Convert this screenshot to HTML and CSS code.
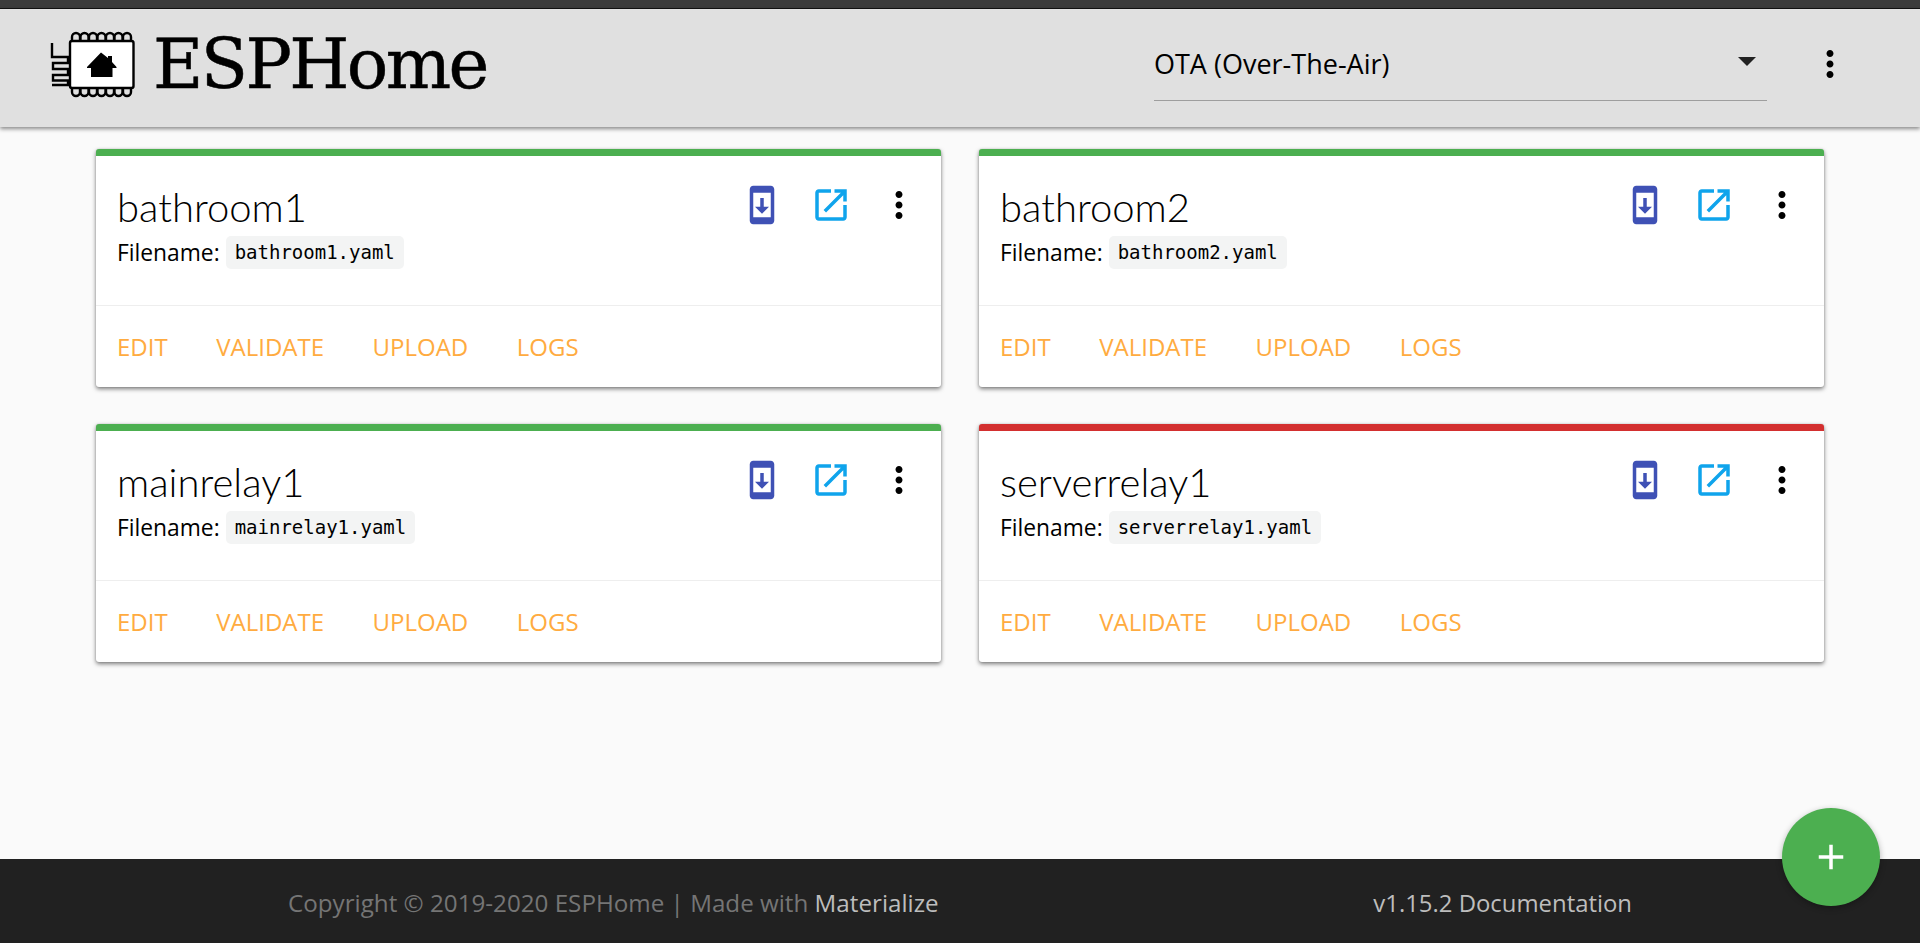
FILE: index.html
```html
<!DOCTYPE html>
<html lang="en">
<head>
    <meta charset="UTF-8">
    <title>ESPHome Dashboard</title>
    <link rel="stylesheet" href="styles.css">
</head>
<body>
    <div class="window-bar"></div>
    <header class="topbar">
        <svg class="logo" viewBox="48 30 90 68" fill="none" stroke="#000" stroke-width="2.4">
            <path d="M52 43V57H68V63H53V69H68V75H53V80.500H68V85H52"/>
            <path d="M72 41V37a3 3 0 0 1 8 0v4M80.500 41V37a3 3 0 0 1 8 0v4M89 41V37a3 3 0 0 1 8 0v4M97.500 41V37a3 3 0 0 1 8 0v4M106 41V37a3 3 0 0 1 8 0v4M114.500 41V37a3 3 0 0 1 8 0v4M123 41V37a3 3 0 0 1 8 0v4"/>
            <path d="M72 88v4a3 3 0 0 0 8 0v-4M80.500 88v4a3 3 0 0 0 8 0v-4M89 88v4a3 3 0 0 0 8 0v-4M97.500 88v4a3 3 0 0 0 8 0v-4M106 88v4a3 3 0 0 0 8 0v-4M114.500 88v4a3 3 0 0 0 8 0v-4M123 88v4a3 3 0 0 0 8 0v-4"/>
            <rect x="70" y="41" width="63.500" height="47" rx="2" fill="#fff"/>
            <path fill="#000" stroke="none" d="M101 52.500L108 58V56H112V62L116.500 67V68H112.500V77H91V68H87V67Z"/>
        </svg>
        <div class="brand">ESPHome</div>
        <div class="mode-select">
            <span>OTA (Over-The-Air)</span>
            <span class="caret"></span>
        </div>
        <svg class="icon more" viewBox="0 0 24 24"><path d="M12 8c1.100 0 2-.9 2-2s-.9-2-2-2-2 .9-2 2 .9 2 2 2zm0 2c-1.100 0-2 .9-2 2s.9 2 2 2 2-.9 2-2-.9-2-2-2zm0 6c-1.100 0-2 .9-2 2s.9 2 2 2 2-.9 2-2-.9-2-2-2z"/></svg>
    </header>

    <main class="nodes">
        <div class="card online">
            <div class="card-content">
                <div class="card-icons">
                    <svg class="icon update" viewBox="0 0 24 24"><path d="M17 1.010L7 1c-1.100 0-2 .9-2 2v18c0 1.100.9 2 2 2h10c1.100 0 2-.9 2-2V3c0-1.100-.9-1.990-2-1.990zM17 19H7V5h10v14zm-1-6h-3V8h-2v5H8l4 4 4-4z"/></svg>
                    <svg class="icon visit" viewBox="0 0 24 24"><path d="M19 19H5V5h7V3H5c-1.110 0-2 .9-2 2v14c0 1.100.89 2 2 2h14c1.100 0 2-.9 2-2v-7h-2v7zM14 3v2h3.590l-9.830 9.830 1.410 1.410L19 6.410V10h2V3h-7z"/></svg>
                    <svg class="icon more" viewBox="0 0 24 24"><path d="M12 8c1.100 0 2-.9 2-2s-.9-2-2-2-2 .9-2 2 .9 2 2 2zm0 2c-1.100 0-2 .9-2 2s.9 2 2 2 2-.9 2-2-.9-2-2-2zm0 6c-1.100 0-2 .9-2 2s.9 2 2 2 2-.9 2-2-.9-2-2-2z"/></svg>
                </div>
                <div class="card-title">bathroom1</div>
                <div class="card-file">Filename: <code>bathroom1.yaml</code></div>
            </div>
            <div class="card-action"><a>EDIT</a><a>VALIDATE</a><a>UPLOAD</a><a>LOGS</a></div>
        </div>
        <div class="card online">
            <div class="card-content">
                <div class="card-icons">
                    <svg class="icon update" viewBox="0 0 24 24"><path d="M17 1.010L7 1c-1.100 0-2 .9-2 2v18c0 1.100.9 2 2 2h10c1.100 0 2-.9 2-2V3c0-1.100-.9-1.990-2-1.990zM17 19H7V5h10v14zm-1-6h-3V8h-2v5H8l4 4 4-4z"/></svg>
                    <svg class="icon visit" viewBox="0 0 24 24"><path d="M19 19H5V5h7V3H5c-1.110 0-2 .9-2 2v14c0 1.100.89 2 2 2h14c1.100 0 2-.9 2-2v-7h-2v7zM14 3v2h3.590l-9.830 9.830 1.410 1.410L19 6.410V10h2V3h-7z"/></svg>
                    <svg class="icon more" viewBox="0 0 24 24"><path d="M12 8c1.100 0 2-.9 2-2s-.9-2-2-2-2 .9-2 2 .9 2 2 2zm0 2c-1.100 0-2 .9-2 2s.9 2 2 2 2-.9 2-2-.9-2-2-2zm0 6c-1.100 0-2 .9-2 2s.9 2 2 2 2-.9 2-2-.9-2-2-2z"/></svg>
                </div>
                <div class="card-title">bathroom2</div>
                <div class="card-file">Filename: <code>bathroom2.yaml</code></div>
            </div>
            <div class="card-action"><a>EDIT</a><a>VALIDATE</a><a>UPLOAD</a><a>LOGS</a></div>
        </div>
        <div class="card online">
            <div class="card-content">
                <div class="card-icons">
                    <svg class="icon update" viewBox="0 0 24 24"><path d="M17 1.010L7 1c-1.100 0-2 .9-2 2v18c0 1.100.9 2 2 2h10c1.100 0 2-.9 2-2V3c0-1.100-.9-1.990-2-1.990zM17 19H7V5h10v14zm-1-6h-3V8h-2v5H8l4 4 4-4z"/></svg>
                    <svg class="icon visit" viewBox="0 0 24 24"><path d="M19 19H5V5h7V3H5c-1.110 0-2 .9-2 2v14c0 1.100.89 2 2 2h14c1.100 0 2-.9 2-2v-7h-2v7zM14 3v2h3.590l-9.830 9.830 1.410 1.410L19 6.410V10h2V3h-7z"/></svg>
                    <svg class="icon more" viewBox="0 0 24 24"><path d="M12 8c1.100 0 2-.9 2-2s-.9-2-2-2-2 .9-2 2 .9 2 2 2zm0 2c-1.100 0-2 .9-2 2s.9 2 2 2 2-.9 2-2-.9-2-2-2zm0 6c-1.100 0-2 .9-2 2s.9 2 2 2 2-.9 2-2-.9-2-2-2z"/></svg>
                </div>
                <div class="card-title">mainrelay1</div>
                <div class="card-file">Filename: <code>mainrelay1.yaml</code></div>
            </div>
            <div class="card-action"><a>EDIT</a><a>VALIDATE</a><a>UPLOAD</a><a>LOGS</a></div>
        </div>
        <div class="card offline">
            <div class="card-content">
                <div class="card-icons">
                    <svg class="icon update" viewBox="0 0 24 24"><path d="M17 1.010L7 1c-1.100 0-2 .9-2 2v18c0 1.100.9 2 2 2h10c1.100 0 2-.9 2-2V3c0-1.100-.9-1.990-2-1.990zM17 19H7V5h10v14zm-1-6h-3V8h-2v5H8l4 4 4-4z"/></svg>
                    <svg class="icon visit" viewBox="0 0 24 24"><path d="M19 19H5V5h7V3H5c-1.110 0-2 .9-2 2v14c0 1.100.89 2 2 2h14c1.100 0 2-.9 2-2v-7h-2v7zM14 3v2h3.590l-9.830 9.830 1.410 1.410L19 6.410V10h2V3h-7z"/></svg>
                    <svg class="icon more" viewBox="0 0 24 24"><path d="M12 8c1.100 0 2-.9 2-2s-.9-2-2-2-2 .9-2 2 .9 2 2 2zm0 2c-1.100 0-2 .9-2 2s.9 2 2 2 2-.9 2-2-.9-2-2-2zm0 6c-1.100 0-2 .9-2 2s.9 2 2 2 2-.9 2-2-.9-2-2-2z"/></svg>
                </div>
                <div class="card-title">serverrelay1</div>
                <div class="card-file">Filename: <code>serverrelay1.yaml</code></div>
            </div>
            <div class="card-action"><a>EDIT</a><a>VALIDATE</a><a>UPLOAD</a><a>LOGS</a></div>
        </div>
    </main>

    <footer class="page-footer">
        <div>Copyright © 2019-2020 ESPHome | Made with <a>Materialize</a></div>
        <div class="version"><a>v1.15.2 Documentation</a></div>
    </footer>

    <div class="fab">
        <svg viewBox="0 0 24 24"><path d="M19 13h-6v6h-2v-6H5v-2h6V5h2v6h6v2z"/></svg>
    </div>
</body>
</html>
```

FILE: styles.css
```css
* {
    margin: 0;
    padding: 0;
    box-sizing: border-box;
}
html, body {
    height: 100%;
}
body {
    display: flex;
    flex-direction: column;
    position: relative;
    overflow: hidden;
    background: #fafafa;
    color: #000;
    font-family: "Open Sans", "Noto Sans", sans-serif;
}
.window-bar {
    height: 9px;
    background: #3b3b3b;
    border-bottom: 1px solid #111;
}
.topbar {
    display: flex;
    align-items: center;
    height: 118px;
    padding: 0 69px 8px 48px;
    background: #e0e0e0;
    box-shadow: 0 2px 4px rgba(0, 0, 0, 0.45);
    z-index: 2;
}
.logo {
    width: 90px;
    height: 68px;
}
.brand {
    margin-left: 15px;
    font-family: "DejaVu Serif", serif;
    font-size: 69px;
    letter-spacing: -2.600px;
    line-height: 68px;
    -webkit-text-stroke: 0.5px #000;
}
.mode-select {
    display: flex;
    align-items: center;
    justify-content: space-between;
    width: 613px;
    height: 74px;
    margin-left: auto;
    margin-right: 42px;
    padding-right: 11px;
    border-bottom: 1px solid #9e9e9e;
    font-size: 27px;
}
.caret {
    margin-bottom: 4px;
    border-left: 9px solid transparent;
    border-right: 9px solid transparent;
    border-top: 9px solid #222;
}
.icon {
    display: block;
    flex: none;
    width: 42px;
    height: 42px;
}
.nodes {
    display: grid;
    grid-template-columns: 845px 845px;
    grid-auto-rows: 238px;
    column-gap: 38px;
    row-gap: 37px;
    flex: 1;
    padding: 22px 0 0 96px;
}
.card {
    display: flex;
    flex-direction: column;
    background: #fff;
    border-top: 7px solid #4caf50;
    border-radius: 3px;
    box-shadow: 0 2px 4px rgba(0, 0, 0, 0.5), 0 0 2px rgba(0, 0, 0, 0.14);
}
.card.offline {
    border-top-color: #d32f2f;
}
.card-content {
    height: 150px;
    padding: 25px 21px 0;
    border-bottom: 1px solid #eee;
}
.card-icons {
    display: flex;
    gap: 26.500px;
    float: right;
    margin: 3px 0 0;
}
.update {
    fill: #3f51b5;
}
.visit {
    fill: #0fa4ec;
}
.card-title {
    font-family: Lato, "Open Sans", sans-serif;
    font-size: 40px;
    font-weight: 300;
    line-height: 52px;
}
.card-file {
    display: flex;
    align-items: center;
    gap: 6px;
    margin-top: 3px;
    font-size: 22.800px;
    line-height: 33px;
}
code {
    padding: 0 9px;
    height: 33px;
    background: #f3f4f4;
    border-radius: 5px;
    font-family: "DejaVu Sans Mono", monospace;
    font-size: 19px;
    line-height: 33px;
}
.card-action {
    display: flex;
    gap: 48.500px;
    padding: 0 21px;
    height: 81px;
    align-items: center;
    font-size: 24px;
    color: #ffab40;
}
.page-footer {
    display: flex;
    justify-content: space-between;
    align-items: center;
    height: 84px;
    padding: 2px 288px 0;
    background: #212121;
    color: #757575;
    font-size: 24.200px;
}
.page-footer a {
    color: #bdbdbd;
}
.version {
    font-size: 23.900px;
}
.fab {
    position: absolute;
    right: 40px;
    bottom: 37px;
    display: flex;
    align-items: center;
    justify-content: center;
    width: 98px;
    height: 98px;
    border-radius: 50%;
    background: #4caf50;
    box-shadow: 0 2px 6px rgba(0, 0, 0, 0.3);
}
.fab svg {
    width: 42px;
    height: 42px;
    fill: #fff;
}
```
